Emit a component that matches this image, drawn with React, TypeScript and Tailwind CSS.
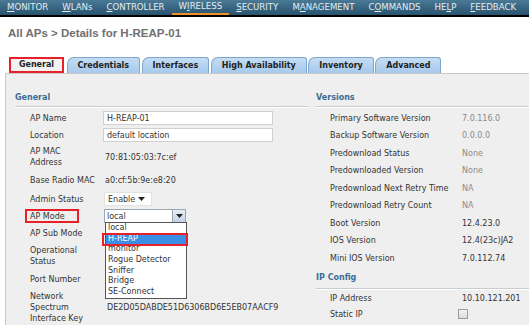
import React from "react";

const navItems: { pre: string; u: string; post: string; active?: boolean }[] = [
  { pre: "", u: "M", post: "ONITOR" },
  { pre: "", u: "W", post: "LANs" },
  { pre: "", u: "C", post: "ONTROLLER" },
  { pre: "W", u: "I", post: "RELESS", active: true },
  { pre: "", u: "S", post: "ECURITY" },
  { pre: "M", u: "A", post: "NAGEMENT" },
  { pre: "C", u: "O", post: "MMANDS" },
  { pre: "HE", u: "L", post: "P" },
  { pre: "", u: "F", post: "EEDBACK" },
];

const tabs = ["Credentials", "Interfaces", "High Availability", "Inventory", "Advanced"];

const versions: [string, string, boolean][] = [
  ["Primary Software Version", "7.0.116.0", true],
  ["Backup Software Version", "0.0.0.0", true],
  ["Predownload Status", "None", true],
  ["Predownloaded Version", "None", true],
  ["Predownload Next Retry Time", "NA", true],
  ["Predownload Retry Count", "NA", true],
  ["Boot Version", "12.4.23.0", false],
  ["IOS Version", "12.4(23c)JA2", false],
  ["Mini IOS Version", "7.0.112.74", false],
];

const modes = ["local", "H-REAP", "monitor", "Rogue Detector", "Sniffer", "Bridge", "SE-Connect"];

function SectionHeader({ title }: { title: string }) {
  return (
    <div className="pt-[18px]">
      <div className="h-[11px] leading-[11px] text-[8px] font-bold text-[#3b6d96] pb-0">{title}</div>
      <div className="mt-[3px] h-[2px] border-t border-[#c8cdd2] border-b border-b-white" />
    </div>
  );
}

function Arrow({ className }: { className?: string }) {
  return (
    <svg width="7" height="4" viewBox="0 0 7 4" className={className}>
      <path d="M0 0 L7 0 L3.5 4 Z" fill="#222" />
    </svg>
  );
}

export default function App() {
  return (
    <div className="w-[529px] h-[325px] overflow-hidden bg-white flex flex-col font-['DejaVu_Sans',sans-serif]">
      {/* top nav */}
      <div className="h-[17px] shrink-0 bg-gradient-to-b from-[#4a7a96] to-[#27536e] border-b-2 border-black flex">
        {navItems.map((it, i) => (
          <div
            key={i}
            className={
              "h-[15px] px-[7px] flex items-center text-[8.6px] leading-none text-[#e4edf3] whitespace-nowrap " +
              (it.active ? "border-b-2 border-[#f0902a]" : "")
            }
          >
            {it.pre}
            <span className="underline underline-offset-1">{it.u}</span>
            {it.post}
          </div>
        ))}
      </div>

      {/* title */}
      <div className="pt-[10px] pl-[8px] h-[39px] shrink-0 font-['Liberation_Sans',Arial,sans-serif] font-bold text-[11.5px] leading-[13px] text-[#707070]">
        All APs &gt; Details for H-REAP-01
      </div>

      {/* tabs */}
      <div className="flex items-end pl-[9px] h-[17px] shrink-0 gap-[1.5px]">
        <div className="h-[16px] w-[55px] mr-[1px] border-2 border-[#e8202a] bg-[#f2f2f2] flex items-center justify-center text-[8px] font-bold text-[#222]">
          General
        </div>
        {tabs.map((t) => (
          <div
            key={t}
            className="h-[16px] px-[10px] rounded-tl-[7px] rounded-tr-[3px] border border-b-0 border-[#7ea7cf] bg-gradient-to-b from-[#c4ddf4] to-[#a6c9ec] flex items-center text-[8px] font-bold text-[#222] whitespace-nowrap"
          >
            {t}
          </div>
        ))}
      </div>

      {/* content */}
      <div className="flex-1 flex pl-[5px]">
        <div className="flex-1 flex bg-[#efefef] border-l border-t border-[#c9c9c9] text-[8px] leading-[11px] text-[#333]">
          {/* left column */}
          <div className="w-[302px] pl-[9px] relative">
            <SectionHeader title="General" />
            <div className="mt-[1.5px] pl-[15px]">
              <div className="h-[17px] flex items-center">
                <div className="w-[73px]">AP Name</div>
                <div className="w-[170px] h-[14px] bg-white border border-[#d0d0d0] pl-[3px] flex items-center">H-REAP-01</div>
              </div>
              <div className="h-[17px] flex items-center">
                <div className="w-[73px]">Location</div>
                <div className="w-[170px] h-[14px] bg-white border border-[#d0d0d0] pl-[3px] flex items-center">default location</div>
              </div>
              <div className="h-[27px] flex items-center">
                <div className="w-[75px]">AP MAC<br />Address</div>
                <div>70:81:05:03:7c:ef</div>
              </div>
              <div className="h-[20px] flex items-center">
                <div className="w-[75px] whitespace-nowrap">Base Radio MAC</div>
                <div>a0:cf:5b:9e:e8:20</div>
              </div>
              <div className="h-[17px] flex items-center">
                <div className="w-[74px]">Admin Status</div>
                <div className="w-[48px] h-[14px] bg-white border border-[#e2e2e2] flex items-center justify-between pl-[3px] pr-[6px]">
                  Enable
                  <Arrow />
                </div>
              </div>
              <div className="h-[17px] flex items-center relative">
                <div className="w-[74px] flex">
                  <div className="-ml-[5px] pl-[3px] w-[54px] h-[14px] border-2 border-[#e8202a] flex items-center">AP Mode</div>
                </div>
                <div className="relative">
                  <div className="w-[82px] h-[14px] bg-white border border-[#9aa6b2] flex items-center pl-[2px] justify-between">
                    local
                    <div className="w-[13px] h-[12px] bg-gradient-to-b from-[#e6eef6] to-[#c2d3e4] border-l border-[#9aa6b2] flex items-center justify-center">
                      <Arrow />
                    </div>
                  </div>
                  {/* dropdown list */}
                  <div className="absolute left-[1px] top-[13px] w-[82px] bg-white border border-[#555] z-10 leading-[10.7px]">
                    {modes.map((m) =>
                      m === "H-REAP" ? (
                        <div key={m} className="relative h-[10.7px]">
                          <div className="h-[10.7px] bg-[#3b8ee6] text-white pl-[2px]">{m}</div>
                          <div className="absolute -left-[4px] -right-[2px] -top-[1px] -bottom-[2px] border-2 border-[#e8202a]" />
                        </div>
                      ) : (
                        <div key={m} className="h-[10.7px] pl-[2px]">{m}</div>
                      )
                    )}
                  </div>
                </div>
              </div>
              <div className="h-[17px] flex items-center">
                <div className="w-[74px]">AP Sub Mode</div>
              </div>
              <div className="h-[29px] flex items-center">
                <div className="w-[74px]">Operational<br />Status</div>
              </div>
              <div className="h-[17px] flex items-center">
                <div className="w-[74px]">Port Number</div>
              </div>
              <div className="h-[39px] flex items-center">
                <div className="w-[77px]">Network<br />Spectrum<br />Interface Key</div>
                <div>DE2D05DABDE51D6306BD6E5EB07AACF9</div>
              </div>
            </div>
          </div>

          {/* right column */}
          <div className="flex-1 pl-[8px]">
            <SectionHeader title="Versions" />
            <div className="mt-[1.25px] pl-[14px]">
              {versions.map(([l, v, gray]) => (
                <div key={l} className="h-[17.5px] flex items-center">
                  <div className="w-[132px] whitespace-nowrap">{l}</div>
                  <div className={gray ? "text-[#8a8a8a]" : "text-[#333]"}>{v}</div>
                </div>
              ))}
            </div>
            <div className="pt-[5px]">
              <div className="h-[11px] leading-[11px] text-[8px] font-bold text-[#3b6d96]">IP Config</div>
              <div className="mt-[5px] h-[2px] border-t border-[#c8cdd2] border-b border-b-white" />
            </div>
            <div className="pl-[14px]">
              <div className="h-[17px] flex items-center">
                <div className="w-[132px]">IP Address</div>
                <div>10.10.121.201</div>
              </div>
              <div className="h-[15px] flex items-center">
                <div className="w-[128px]">Static IP</div>
                <div className="w-[10px] h-[10px] border border-[#9c9c9c] bg-gradient-to-b from-[#f4f4f4] to-[#dcdcdc]" />
              </div>
            </div>
          </div>
        </div>
      </div>
    </div>
  );
}
